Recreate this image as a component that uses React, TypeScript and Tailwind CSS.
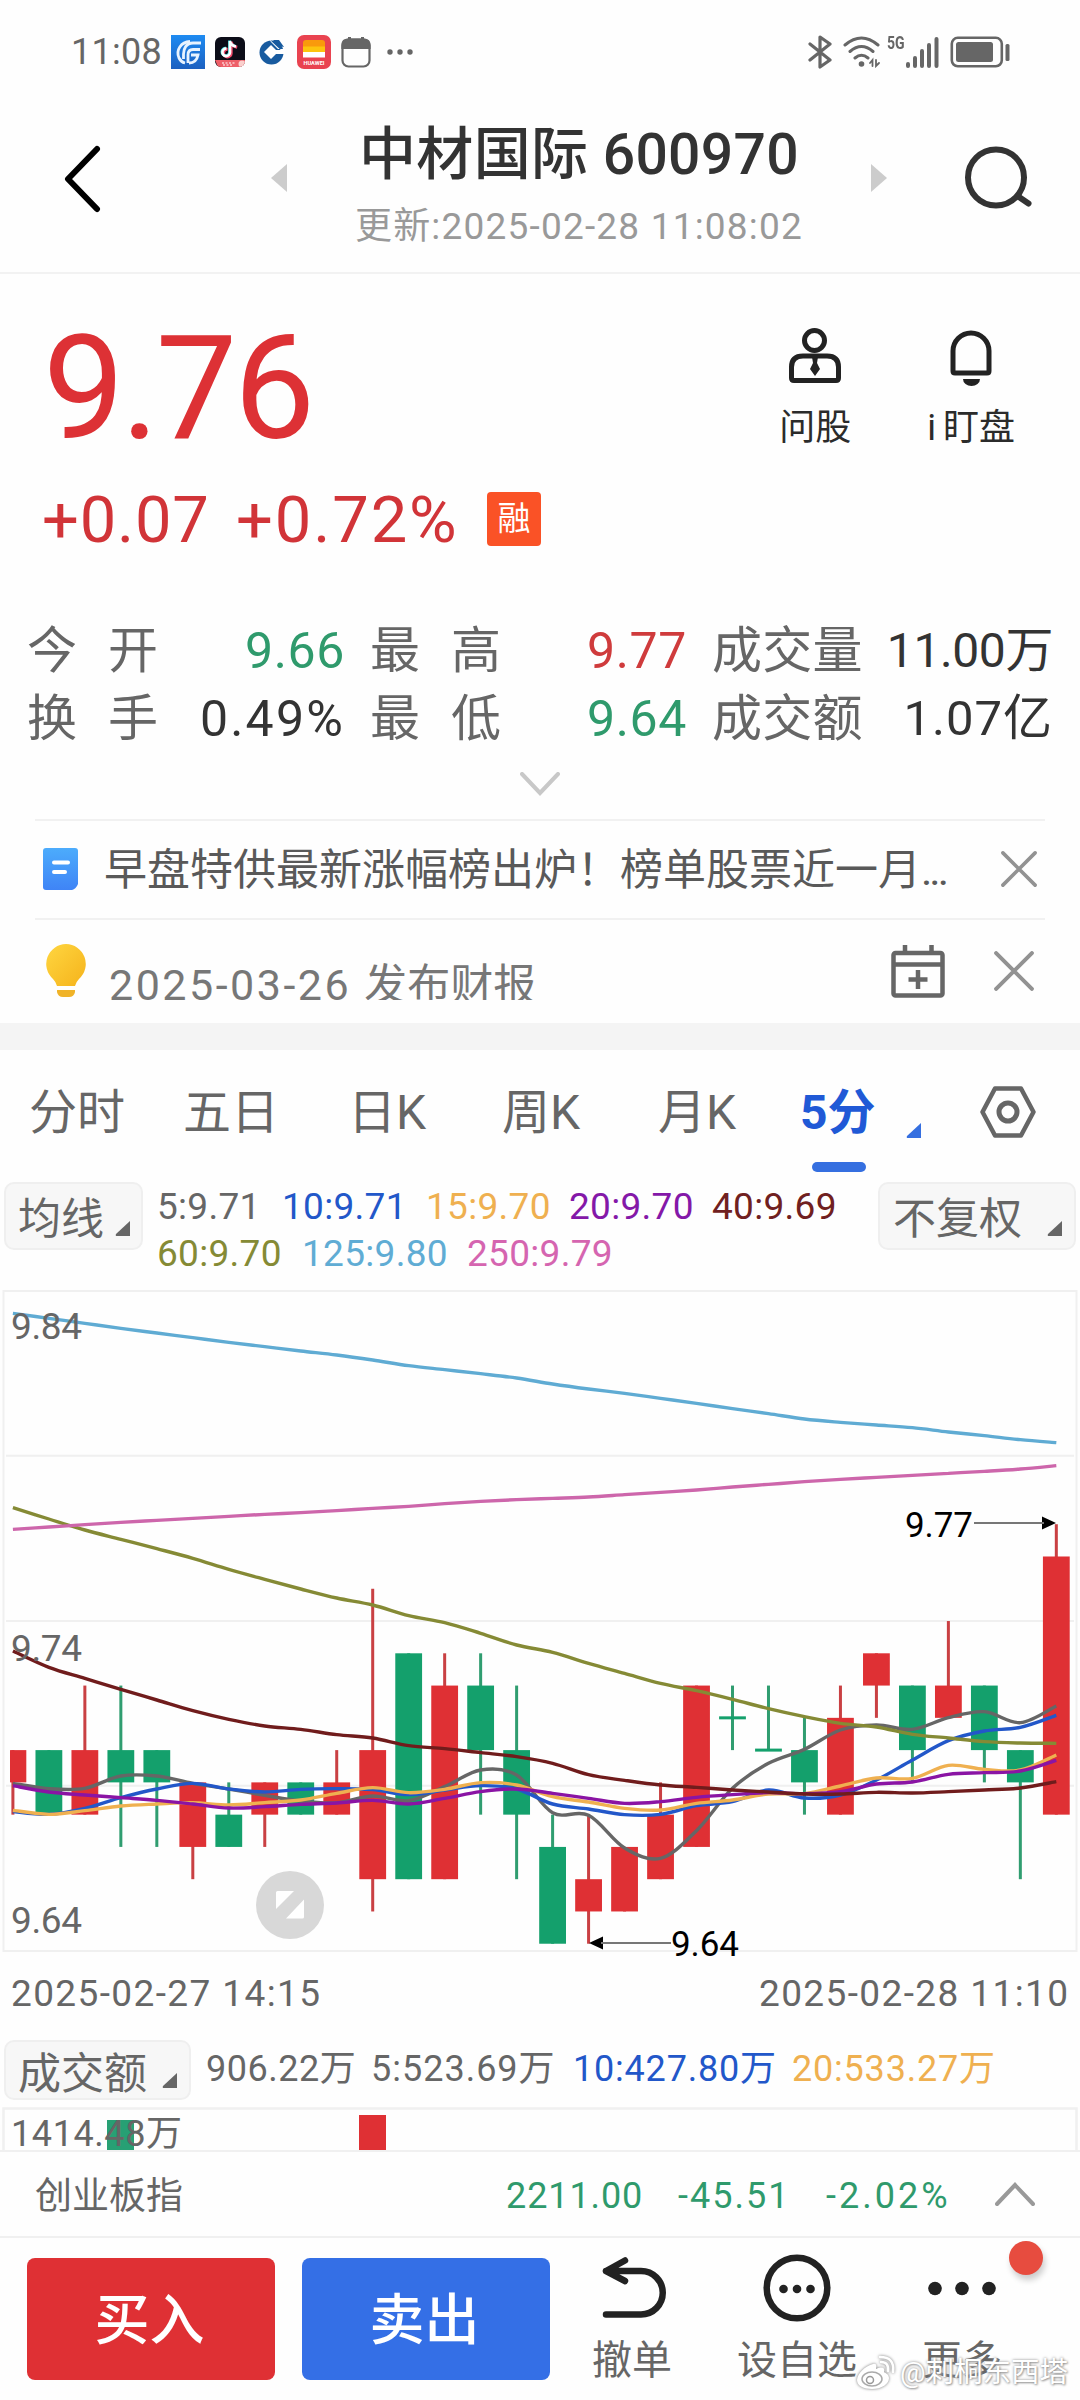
import React from 'react';

const X0 = 12.9;
const STEP = 35.98;
const xAt = (i: number) => X0 + STEP * i;
// One level is one price tick (0.01) below 9.73.
const yAt = (level: number) => 1653.3 + 32.27 * level - 1280;

type Candle = [up: boolean, top: number, bottom: number, high: number, low: number];

const CANDLES: Candle[] = [
  [true, 3, 4, 3, 5],
  [false, 3, 5, 3, 5],
  [true, 3, 5, 1, 5],
  [false, 3, 4, 1, 6],
  [false, 3, 4, 3, 6],
  [true, 4, 6, 4, 7],
  [false, 5, 6, 4, 6],
  [true, 4, 5, 4, 6],
  [false, 4, 5, 4, 5],
  [true, 4, 5, 3, 5],
  [true, 3, 7, -2, 8],
  [false, 0, 7, 0, 7],
  [true, 1, 7, 0, 7],
  [false, 1, 3, 0, 5],
  [false, 3, 5, 1, 7],
  [false, 6, 9, 5, 9],
  [true, 7, 8, 5, 9],
  [true, 6, 8, 6, 8],
  [true, 5, 7, 4, 7],
  [true, 1, 6, 1, 6],
  [false, 2, 2, 1, 3],
  [false, 3, 3, 1, 3],
  [false, 3, 4, 2, 5],
  [true, 2, 5, 1, 5],
  [true, 0, 1, 0, 2],
  [false, 1, 3, 1, 4],
  [true, 1, 2, -1, 2],
  [false, 1, 3, 1, 4],
  [false, 3, 4, 3, 7],
  [true, -3, 5, -4, 5],
];

// Moving averages, in thirds of a pixel below the 9.74 grid line.
const AVERAGES: { color: string; points: number[] }[] = [
  { color: '#666666', points: [490, 506, 505, 468, 468, 490, 507, 526, 543, 548, 528, 542, 500, 450, 465, 578, 586, 684, 715, 632, 505, 430, 388, 330, 315, 328, 293, 275, 308, 258] },
  { color: '#2257c9', points: [575, 583, 565, 533, 507, 490, 507, 516, 508, 506, 509, 524, 510, 497, 507, 552, 567, 584, 583, 557, 545, 510, 534, 525, 480, 420, 362, 333, 322, 286] },
  { color: '#efb050', points: [571, 583, 572, 558, 552, 548, 555, 548, 540, 520, 503, 518, 508, 488, 495, 530, 546, 565, 570, 550, 540, 522, 521, 498, 474, 475, 436, 448, 450, 405] },
  { color: '#8a14a4', points: [497, 516, 525, 533, 541, 552, 564, 560, 553, 549, 541, 552, 535, 515, 507, 520, 535, 550, 545, 532, 524, 518, 521, 515, 492, 486, 463, 458, 453, 421] },
  { color: '#701c1c', points: [93, 142, 175, 208, 240, 272, 298, 318, 328, 344, 354, 377, 386, 398, 410, 430, 464, 481, 495, 502, 510, 516, 522, 522, 517, 519, 515, 510, 504, 485] },
  { color: '#858a35', points: [-337, -303, -270, -242, -214, -185, -152, -122, -93, -66, -45, -13, 8, 40, 75, 97, 130, 160, 190, 212, 238, 266, 290, 310, 321, 343, 354, 365, 369, 370] },
  { color: '#5fabd3', points: [-920, -905, -890, -875, -861, -847, -833, -820, -807, -795, -780, -763, -751, -739, -726, -708, -693, -680, -665, -650, -634, -619, -603, -593, -585, -577, -564, -553, -541, -532] },
  { color: '#cd66ab', points: [-272, -279, -286, -293, -299, -305, -311, -317, -322, -328, -335, -341, -349, -356, -361, -365, -369, -376, -383, -390, -399, -407, -415, -422, -428, -434, -440, -446, -453, -463] },
];

function smooth(points: number[]) {
  const p = points.map((v, i) => [xAt(i), 340 + v / 3]);
  let d = `M${p[0][0]},${p[0][1]}`;
  for (let i = 0; i < p.length - 1; i++) {
    const a = p[Math.max(0, i - 1)];
    const b = p[i];
    const c = p[i + 1];
    const e = p[Math.min(p.length - 1, i + 2)];
    d += `C${b[0] + (c[0] - a[0]) / 6},${b[1] + (c[1] - a[1]) / 6} ${c[0] - (e[0] - b[0]) / 6},${c[1] - (e[1] - b[1]) / 6} ${c[0]},${c[1]}`;
  }
  return d;
}

function Corner({ className }: { className: string }) {
  return (
    <svg viewBox="0 0 15 15" className={`size-[15px] ${className}`} fill="currentColor">
      <path d="M15 0V15H2Q0 15 1 13Z" />
    </svg>
  );
}

function Close({ className }: { className: string }) {
  return (
    <svg viewBox="0 0 38 38" className={className} fill="none" stroke="#929292" strokeWidth="3.8" strokeLinecap="round">
      <path d="M2 2L36 36M36 2L2 36" />
    </svg>
  );
}

function StatusBar() {
  return (
    <div className="flex h-[104px] items-center pl-[71px] pr-[70px] text-[#666]">
      <span className="w-[99px] text-[36px] leading-[40px] tracking-[0.3px]">11:08</span>
      <svg viewBox="0 0 34 34" className="ml-px size-[34px]">
        <defs>
          <linearGradient id="gf" x1="0" y1="0" x2="0" y2="1">
            <stop offset="0" stopColor="#1e8bf2" />
            <stop offset="1" stopColor="#1c60c0" />
          </linearGradient>
        </defs>
        <rect width="34" height="34" fill="url(#gf)" />
        <g fill="none" stroke="#e8f3ff" strokeWidth="2.800">
          <path d="M19 6.500C10 7 4.500 15 8 23C9.500 26 12 27.500 14 28" />
          <path d="M30 8H22C15 8 12.500 14 12.500 19V24" />
          <path d="M29 14.500H22C18.500 14.500 17 17 17 20V28" />
          <path d="M20 20H27C26 25 23 28 18 28" />
        </g>
      </svg>
      <svg viewBox="0 0 30 30" className="ml-[10px] size-[30px]">
        <clipPath id="dy"><rect width="30" height="30" rx="6" /></clipPath>
        <g clipPath="url(#dy)">
          <rect width="30" height="30" fill="#0c0d18" />
          <path d="M15 4V15.500A3.800 3.800 0 1 1 11.500 11.500M15 4C15.500 7 18 9 21 9.500" fill="none" stroke="#f04a6c" strokeWidth="3" transform="translate(1.200 .8)" />
          <path d="M15 4V15.500A3.800 3.800 0 1 1 11.500 11.500M15 4C15.500 7 18 9 21 9.500" fill="none" stroke="#46dfe4" strokeWidth="2.600" transform="translate(-.6 -.5)" />
          <path d="M15 4V15.500A3.800 3.800 0 1 1 11.500 11.500M15 4C15.500 7 18 9 21 9.500" fill="none" stroke="#fff" strokeWidth="2.600" />
          <path d="M0 23H30V30H3Z" fill="#ee5f68" />
          <path d="M7 26H20M8 28H18" stroke="#fff" strokeWidth="1.200" strokeDasharray="2 1.500" />
          <circle cx="27" cy="27" r="3.500" fill="#fbd0cd" />
        </g>
      </svg>
      <svg viewBox="0 0 26 26" className="ml-[14px] size-[26px]">
        <circle cx="12.500" cy="13.500" r="12" fill="#185b9f" />
        <path d="M12 6L19 13L12 20L5 13Z" fill="#fff" />
        <path d="M10 0L26 15V10H19L12 3Z" fill="#fff" />
        <path d="M14 1L20 1L25 8L20 7Z" fill="#185b9f" />
        <path d="M17 11H26V15H17Z" fill="#fff" />
      </svg>
      <svg viewBox="0 0 34 34" className="ml-[12px] size-[34px]">
        <rect width="34" height="34" rx="7" fill="#e94350" />
        <path d="M6 8Q6 5 9 5H25Q28 5 28 8V12H6Z" fill="#f99a0c" />
        <path d="M6 11.500H28V17H6Z" fill="#fdc40e" />
        <path d="M6 17H28V22.500H6Z" fill="#fff" />
        <text x="6.500" y="30" fontSize="6" fontWeight="700" fill="#fff" textLength="21" lengthAdjust="spacingAndGlyphs">HUAWEI</text>
      </svg>
      <svg viewBox="0 0 30 32" className="ml-[10px] h-[32px] w-[30px]" fill="none" stroke="#666" strokeWidth="2.200">
        <rect x="1.500" y="3.500" width="27" height="27" rx="6" />
        <path d="M1.500 12V9Q1.500 3.500 7 3.500H23Q28.500 3.500 28.500 9V12Z" fill="#666" />
        <path d="M8.500 1V4M21.500 1V4" strokeWidth="3" />
      </svg>
      <svg viewBox="0 0 26 6" className="ml-[16px] h-[6px] w-[26px]" fill="#666">
        <circle cx="3" cy="3" r="2.700" />
        <circle cx="13" cy="3" r="2.700" />
        <circle cx="23" cy="3" r="2.700" />
      </svg>
      <svg viewBox="0 0 24 34" className="ml-auto h-[34px] w-[24px]" fill="none" stroke="#666" strokeWidth="3.200" strokeLinejoin="round" strokeLinecap="round">
        <path d="M2 9L22 25L12 32V2L22 9L2 25" />
      </svg>
      <svg viewBox="0 0 38 32" className="ml-[11px] h-[32px] w-[38px]" fill="none" stroke="#666" strokeWidth="3" strokeLinecap="round">
        <path d="M2 9Q18.500 -5 35 9M7 15.500Q18.500 5.500 30 15.500M12 22Q18.500 16.500 25 22" />
        <circle cx="18.500" cy="28" r="2.800" fill="#666" stroke="none" />
        <path d="M27 27L29.500 24V30M33 24V30L36 27" strokeWidth="1.800" />
      </svg>
      <span className="mb-[18px] ml-[6px] w-[18px] origin-left scale-x-[0.78] text-[18px] font-bold leading-[18px]">5G</span>
      <svg viewBox="0 0 34 32" className="h-[32px] w-[34px]" fill="none" stroke="#666" strokeWidth="4" strokeLinecap="round">
        <path d="M3 28V30M10 22V30M17 15V30M24 9V30M31.500 3V30" />
      </svg>
      <svg viewBox="0 0 60 32" className="ml-[11px] h-[32px] w-[60px]">
        <rect x="1.800" y="1.800" width="50" height="28.500" rx="6" fill="none" stroke="#666" strokeWidth="2.600" />
        <rect x="6" y="6" width="37" height="20" rx="2.500" fill="#666" />
        <rect x="55.500" y="8" width="4" height="17" rx="1.500" fill="#666" />
      </svg>
    </div>
  );
}

function Header() {
  return (
    <header className="flex h-[170px] items-start border-b-2 border-[#f2f2f2] pl-[63px]">
      <svg viewBox="0 0 38 68" className="mt-[41px] h-[68px] w-[38px]" fill="none" stroke="#000" strokeWidth="6" strokeLinecap="round" strokeLinejoin="round">
        <path d="M34 4L5 34L34 64" />
      </svg>
      <svg viewBox="0 0 16 28" className="ml-[170px] mt-[60px] h-[28px] w-[16px]" fill="#ccc">
        <path d="M16 0V28L0 14Z" />
      </svg>
      <div className="flex w-[584px] flex-col items-center">
        <h1 className="mt-[18px] whitespace-nowrap text-[57px] font-medium leading-[66px] tracking-[0.3px] text-[#333]">中材国际 600970</h1>
        <p className="mt-[17px] whitespace-nowrap text-[37px] leading-[44px] tracking-[1.2px] text-[#999]">更新:2025-02-28 11:08:02</p>
      </div>
      <svg viewBox="0 0 16 28" className="mt-[60px] h-[28px] w-[16px]" fill="#ccc">
        <path d="M0 0V28L16 14Z" />
      </svg>
      <svg viewBox="0 0 72 66" className="ml-[77px] mt-[41px] h-[66px] w-[72px]" fill="none" stroke="#333" strokeWidth="6" strokeLinecap="round">
        <circle cx="32" cy="32.500" r="28" />
        <path d="M55 52L64.500 58.500" />
      </svg>
    </header>
  );
}

function Quote() {
  return (
    <section className="flex h-[327px] justify-between pl-[40px] pr-[65px]">
      <div className="text-[#dd3135]">
        <div className="ml-[3px] mt-[38px] text-[145px] leading-[152px] tracking-[-3.500px]">9.76</div>
        <div className="mt-[20px] flex h-[70px] items-center text-[65px] leading-[72px] text-[#d13438]">
          <span className="ml-[2px] mt-[2px] w-[194px] tracking-[0.8px]">+0.07</span>
          <span className="mt-[2px] w-[251px] tracking-[1.900px]">+0.72%</span>
          <span className="mb-px flex size-[54px] items-center justify-center rounded-[4px] bg-[#fa5226] text-[33px] leading-[54px] text-white">融</span>
        </div>
      </div>
      <div className="flex text-[36px] leading-[44px] text-[#2b2b2b]">
        <div className="mr-[76px] flex flex-col items-center">
          <svg viewBox="0 0 54 56" className="mt-[54px] h-[56px] w-[54px]" fill="none" stroke="#222" strokeWidth="5">
            <circle cx="26.500" cy="12.500" r="10" />
            <path d="M3.500 50V39Q3.500 28 15 28H39Q50.500 28 50.500 39V50Q50.500 52.500 48 52.500H6Q3.500 52.500 3.500 50Z" />
            <path d="M24 29H30L29 35L32 41L27 48L22 41L25 35Z" fill="#222" stroke="none" />
          </svg>
          <span className="mt-[22px]">问股</span>
        </div>
        <div className="flex flex-col items-center">
          <svg viewBox="0 0 44 56" className="mt-[56px] h-[56px] w-[44px]" fill="none" stroke="#222" strokeWidth="5">
            <path d="M4 41V21A18 18 0 0 1 40 21V41Q40 43 38 43H6Q4 43 4 41Z" />
            <path d="M14 49H31A8.500 7 0 0 1 14 49Z" fill="#222" stroke="none" />
          </svg>
          <span className="mt-[20px] flex gap-[7px] whitespace-nowrap"><span>i</span><span>盯盘</span></span>
        </div>
      </div>
    </section>
  );
}

const STATS: [string, string, string][] = [
  ['今开', '9.66', 'text-[#2f9a6c] tracking-[0.6px]'],
  ['最高', '9.77', 'text-[#cf3b3c] tracking-[0.6px]'],
  ['成交量', '11.00万', 'text-[#333] text-[48px] tracking-[-0.4px]'],
  ['换手', '0.49%', 'text-[#333] tracking-[2.200px]'],
  ['最低', '9.64', 'text-[#2f9a6c] tracking-[0.6px]'],
  ['成交额', '1.07亿', 'text-[#333] text-[49px] tracking-[1px]'],
];

function Stats() {
  return (
    <section className="h-[218px] pl-[27px] pr-[27px] pt-[16px]">
      <div className="grid grid-cols-[318px_317px_341px] gap-x-[25px] text-[50px] leading-[68px] text-[#666]">
        {STATS.map(([label, value, tone]) => (
          <div key={label} className="flex items-center justify-between whitespace-nowrap">
            {label.length === 2 ? (
              <span className="flex w-[131px] justify-between"><span>{label[0]}</span><span>{label[1]}</span></span>
            ) : (
              <span className="tracking-[0.3px]">{label}</span>
            )}
            <span className={tone}>{value}</span>
          </div>
        ))}
      </div>
      <svg viewBox="0 0 40 24" className="mx-auto mt-[19px] h-[24px] w-[40px]" fill="none" stroke="#c8c8c8" strokeWidth="4" strokeLinecap="round">
        <path d="M2 2L20 21L38 2" />
      </svg>
    </section>
  );
}

function Notices() {
  return (
    <section className="mx-[35px] text-[43px]">
      <div className="flex h-[99px] items-center border-t-2 border-[#f1f1f1] text-[#595959]">
        <svg viewBox="0 0 35 42" className="mb-[2px] ml-[8px] h-[42px] w-[35px]">
          <defs>
            <linearGradient id="doc" x1="0" y1="0" x2="0" y2="1">
              <stop offset="0" stopColor="#4cacfc" />
              <stop offset="1" stopColor="#3f84f6" />
            </linearGradient>
          </defs>
          <path d="M3 0H32Q35 0 35 3V36Q33 41 29 42H3Q0 42 0 39V3Q0 0 3 0Z" fill="url(#doc)" />
          <path d="M11 14.500H25M11 24H22" stroke="#fff" strokeWidth="4" strokeLinecap="round" />
        </svg>
        <span className="ml-[26px] w-[848px] whitespace-nowrap leading-[60px]">
          早盘特供最新涨幅榜出炉！榜单股票近一月<span className="tracking-[-3px]">...</span>
        </span>
        <Close className="mb-[2px] ml-[49px] size-[36px]" />
      </div>
      <div className="flex h-[105px] border-t-2 border-[#f1f1f1] text-[#777]">
        <svg viewBox="0 0 42 56" className="ml-[10px] mt-[23px] h-[56px] w-[42px]">
          <defs>
            <linearGradient id="bulb" x1="0" y1="0" x2="1" y2="1">
              <stop offset="0" stopColor="#ffd640" />
              <stop offset="1" stopColor="#f5b31c" />
            </linearGradient>
          </defs>
          <path d="M21 1A20 20 0 0 1 34 36Q31 39 30 43H12Q11 39 8 36A20 20 0 0 1 21 1Z" fill="url(#bulb)" />
          <path d="M12 47H30V49Q29 54 24 54H18Q13 54 12 49Z" fill="#f0b328" />
        </svg>
        <div className="ml-[22px] mt-[36px] h-[44px] w-[770px] overflow-hidden whitespace-nowrap leading-[59px]">
          <span className="tracking-[2.500px]">2025-03-26 </span>发布财报
        </div>
        <svg viewBox="0 0 54 54" className="ml-[12px] mt-[24px] size-[54px]" fill="none" stroke="#666" strokeWidth="4.500" strokeLinejoin="round">
          <rect x="2.500" y="9" width="49" height="42.500" rx="2" />
          <path d="M2.500 20.500H51.500M14 1V9M40.500 1V9M27 26V45M17.500 35.500H36.500" />
        </svg>
        <Close className="ml-[49px] mt-[31px] size-[40px]" />
      </div>
    </section>
  );
}

function Tabs() {
  return (
    <nav className="flex h-[132px] pt-[23px] text-[48px] leading-[80px] text-[#666]">
      <span className="ml-[29px] w-[154px]">分时</span>
      <span className="w-[165px]">五日</span>
      <span className="w-[154px]">日K</span>
      <span className="w-[156px]">周K</span>
      <span className="w-[142px]">月K</span>
      <span className="flex w-[106px] flex-col font-bold text-[#2059d6]">
        5分
        <span className="ml-[12px] mt-[9px] h-[10px] w-[54px] rounded-full bg-[#356fe0]" />
      </span>
      <Corner className="mt-[50px] text-[#356fe0]" />
      <svg viewBox="0 0 56 52" className="ml-[59px] mt-[13px] h-[52px] w-[56px]" fill="none" stroke="#666" strokeWidth="4.500" strokeLinejoin="round">
        <path d="M15 2.500H41L53.500 26L41 49.500H15L2.500 26Z" />
        <circle cx="28" cy="26" r="9" strokeWidth="5" />
      </svg>
    </nav>
  );
}

function AverageBar() {
  return (
    <div className="flex h-[98px] items-start px-[4px] text-[#666]">
      <div className="flex h-[68px] w-[139px] shrink-0 items-center rounded-[10px] border-2 border-[#efefef] bg-[#f7f7f7] pl-[12px] text-[43px] leading-[60px]">
        <span className="mt-[5px]">均线</span><Corner className="ml-[11px] mt-[24px]" />
      </div>
      <div className="ml-[14px] mt-px w-[721px] shrink-0 whitespace-nowrap text-[37px] leading-[47px] tracking-[0.3px]">
        <div className="flex">
          <span className="w-[125px]">5:9.71</span>
          <span className="w-[144px] text-[#2257c9]">10:9.71</span>
          <span className="w-[143px] text-[#efb050]">15:9.70</span>
          <span className="w-[143px] text-[#8418a8]">20:9.70</span>
          <span className="text-[#702020]">40:9.69</span>
        </div>
        <div className="flex text-[#858a35]">
          <span className="w-[145px]">60:9.70</span>
          <span className="w-[165px] text-[#60acd4]">125:9.80</span>
          <span className="text-[#d565b0]">250:9.79</span>
        </div>
      </div>
      <div className="flex h-[68px] w-[198px] shrink-0 items-center rounded-[10px] border-2 border-[#efefef] bg-[#f7f7f7] pl-[13px] text-[43px] leading-[60px]">
        <span className="mt-[5px]">不复权</span><Corner className="ml-[25px] mt-[24px]" />
      </div>
    </div>
  );
}

function Chart() {
  return (
    <svg viewBox="0 0 1080 740" className="block h-[740px] w-[1080px]">
      <g fill="none" stroke="#f0f0f0" strokeWidth="2">
        <rect x="3.500" y="11" width="1073" height="660" />
        <path d="M6 175.700H1074M6 341H1074M6 505.700H1074" />
      </g>
      {CANDLES.map(([up, top, bottom, high, low], i) => {
        const left = i === 0 ? 10 : xAt(i) - 13.4;
        const doji = top === bottom;
        return (
          <g key={i} fill={up ? '#df3034' : '#14a06c'}>
            <rect x={xAt(i) - 1.5} y={yAt(high)} width="3" height={yAt(low) - yAt(high)} fill={up ? '#c94043' : '#309d70'} />
            <rect x={left} y={yAt(top) - (doji ? 1.5 : 0)} width={xAt(i) + 13.4 - left} height={doji ? 3 : yAt(bottom) - yAt(top)} />
          </g>
        );
      })}
      {AVERAGES.map(({ color, points }) => (
        <path key={color} d={smooth(points)} fill="none" stroke={color} strokeWidth="3.4" />
      ))}
      <g fontSize="37" fill="#666">
        <text x="11" y="59" textLength="71">9.84</text>
        <text x="11" y="381" textLength="71">9.74</text>
        <text x="11" y="653" textLength="71">9.64</text>
        <text x="11" y="726" textLength="309">2025-02-27 14:15</text>
        <text x="759" y="726" textLength="309">2025-02-28 11:10</text>
      </g>
      <g fontSize="35" fill="#000">
        <text x="905" y="257" textLength="68">9.77</text>
        <text x="671" y="676" textLength="68">9.64</text>
        <path d="M1042 236.500L1056 243L1042 249.500ZM603 656.500L589 663L603 669.500Z" />
        <path d="M974 243H1044M601 663H671" stroke="#777" strokeWidth="2" />
      </g>
      <circle cx="290" cy="625" r="34" fill="#d8d8d8" />
      <path d="M277.500 611H294L276 629V612.500Q276 611 277.500 611ZM304 619.500V637Q304 638.500 302.500 638.500H286Z" fill="#fff" />
    </svg>
  );
}

function Volume() {
  return (
    <section className="h-[130px] text-[#666]">
      <div className="flex h-[87px] items-start whitespace-nowrap pl-[4px] pt-[20px]">
        <div className="flex h-[60px] w-[187px] items-center rounded-[10px] border-2 border-[#efefef] bg-[#f7f7f7] pl-[12px] text-[43px] leading-[56px]">
          <span className="mt-[7px]">成交额</span><Corner className="ml-[15px] mt-[20px]" />
        </div>
        <div className="ml-[15px] flex text-[36px] leading-[58px]">
          <span className="w-[165px] tracking-[0.5px]">906.22万</span>
          <span className="w-[202px] tracking-[1px]">5:523.69万</span>
          <span className="w-[219px] tracking-[0.8px] text-[#2257c9]">10:427.80万</span>
          <span className="tracking-[0.8px] text-[#efb050]">20:533.27万</span>
        </div>
      </div>
      <svg viewBox="0 0 1080 43" className="block h-[43px] w-[1080px]">
        <path d="M3.500 43V1.500H1076.500V43" fill="none" stroke="#f0f0f0" strokeWidth="2.500" />
        <rect x="107" y="13" width="27" height="30" fill="#27a074" />
        <rect x="359" y="8" width="27" height="35" fill="#df3034" />
        <text x="11" y="39" fontSize="36" fill="#666" textLength="171">1414.48万</text>
      </svg>
    </section>
  );
}

function IndexBar() {
  return (
    <div className="flex h-[88px] items-center whitespace-nowrap border-y-2 border-[#f0f0f0] pl-[35px] pr-[45px] text-[36px] leading-[50px] text-[#2f9a6c]">
      <span className="mt-[5px] w-[471px] text-[37px] text-[#666]">创业板指</span>
      <span className="mt-[3px] w-[172px] tracking-[0.9px]">2211.00</span>
      <span className="mt-[3px] w-[148px] tracking-[2px]">-45.51</span>
      <span className="mt-[3px] tracking-[3px]">-2.02%</span>
      <svg viewBox="0 0 40 24" className="ml-auto h-[24px] w-[40px]" fill="none" stroke="#999" strokeWidth="4" strokeLinecap="round">
        <path d="M2 22L20 3L38 22" />
      </svg>
    </div>
  );
}

function ActionBar() {
  return (
    <footer className="relative flex h-[163px] pl-[27px] pt-[20px] text-[40px] leading-[50px] text-[#666]">
      <button className="h-[122px] w-[248px] rounded-[8px] bg-[#df3034] pr-[3px] pt-[3px] text-[55px] font-medium leading-none text-white">买入</button>
      <button className="ml-[27px] h-[122px] w-[248px] rounded-[8px] bg-[#346fe6] pr-[3px] pt-[3px] text-[55px] font-medium leading-none text-white">卖出</button>
      <div className="ml-[36px] flex w-[92px] flex-col items-center">
        <svg viewBox="0 0 68 64" className="ml-[5px] mt-[-1px] h-[64px] w-[68px]" fill="none" stroke="#222" strokeWidth="6.500" strokeLinecap="round" strokeLinejoin="round">
          <path d="M24 3.500L5 14L24 24M5 14H40A21.500 21.500 0 0 1 40 57.500H5" />
        </svg>
        <span className="mt-[15px]">撤单</span>
      </div>
      <div className="ml-[54px] flex w-[130px] flex-col items-center">
        <svg viewBox="0 0 68 68" className="mt-[-4px] size-[68px]" fill="#222">
          <circle cx="34" cy="34" r="30.300" fill="none" stroke="#222" strokeWidth="6.500" />
          <circle cx="20.500" cy="35" r="4.300" />
          <circle cx="34" cy="35" r="4.300" />
          <circle cx="47.500" cy="35" r="4.300" />
        </svg>
        <span className="mt-[14px]">设自选</span>
      </div>
      <div className="ml-[54px] flex w-[92px] flex-col items-center">
        <svg viewBox="0 0 68 68" className="mt-[-4px] size-[68px]" fill="#222">
          <circle cx="7" cy="34.500" r="6.800" />
          <circle cx="34" cy="34.500" r="6.800" />
          <circle cx="61" cy="34.500" r="6.800" />
        </svg>
        <span className="mt-[14px]">更多</span>
      </div>
      <span className="absolute left-[1009px] top-[3px] size-[34px] rounded-full bg-[#e74c3f] shadow-[2px_5px_6px_rgba(0,0,0,0.2)]" />
      <div className="absolute left-[856px] top-[117px] flex items-center whitespace-nowrap text-[28.500px] leading-[36px] text-white [text-shadow:0_0_3px_#888,1px_1px_2px_#aaa]">
        <svg viewBox="0 0 40 36" className="h-[36px] w-[40px] drop-shadow-[0_0_1.500px_#777]" fill="#fff">
          <path d="M17 9C9 11 1 19 1 25C1 31 8 34 16 34C26 34 33 29 33 23C33 19 29 18 28 17C29 13 27 11 20 14C21 10 20 8 17 9Z" />
          <ellipse cx="16" cy="24" rx="10" ry="7" fill="#fff" stroke="#aaa" strokeWidth="1.500" />
          <circle cx="14" cy="25" r="3.500" fill="none" stroke="#999" strokeWidth="1.500" />
          <path d="M25 7Q33 7 32 16M24 2Q39 2 37 17" fill="none" stroke="#fff" strokeWidth="2.600" strokeLinecap="round" />
        </svg>
        <span className="ml-[4px]">@刺桐东西塔</span>
      </div>
    </footer>
  );
}

export default function App() {
  return (
    <main className="h-[2400px] w-[1080px] overflow-hidden bg-[#fefefe] font-[Roboto,'Noto_Sans_CJK_SC',sans-serif]">
      <StatusBar />
      <Header />
      <Quote />
      <Stats />
      <Notices />
      <div className="h-[27px] bg-[#f4f4f4]" />
      <Tabs />
      <AverageBar />
      <Chart />
      <Volume />
      <IndexBar />
      <ActionBar />
    </main>
  );
}
